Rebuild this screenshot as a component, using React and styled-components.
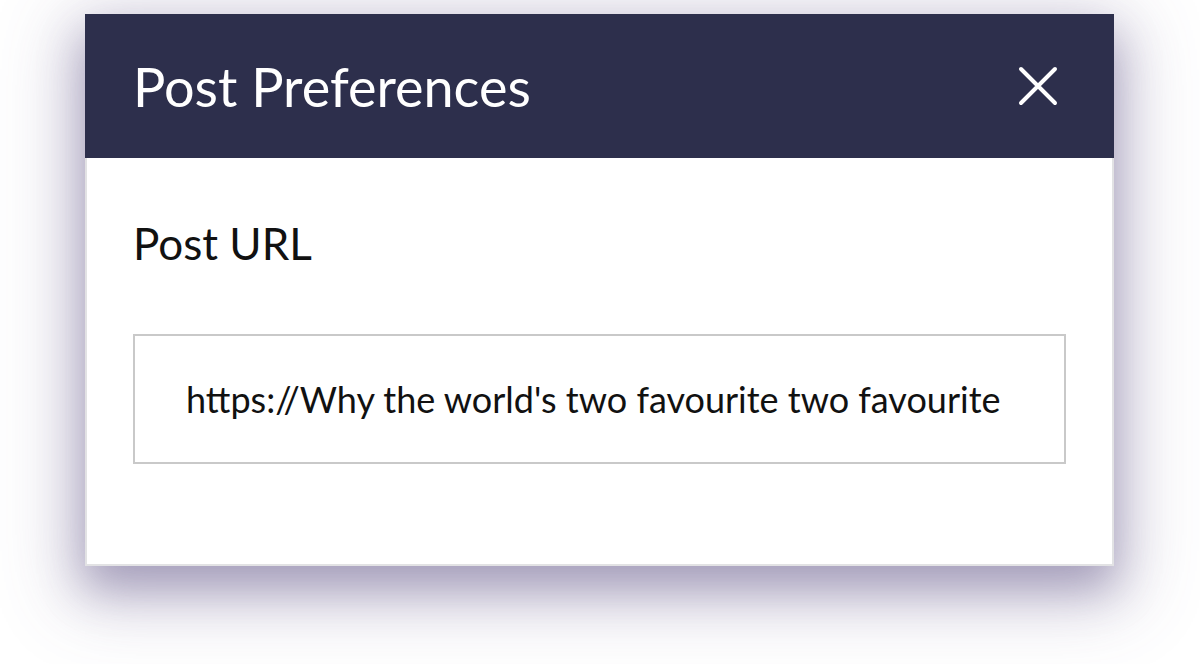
import React from "react";
import styled, { createGlobalStyle } from "styled-components";

const GlobalStyle = createGlobalStyle`
  html, body {
    margin: 0;
    padding: 0;
    background: #fff;
    font-family: Lato, "Open Sans", sans-serif;
  }
`;

const Page = styled.div`
  width: 1200px;
  height: 664px;
  padding: 14px 0 0 85px;
  box-sizing: border-box;
  overflow: hidden;
`;

const Dialog = styled.div`
  width: 1029px;
  height: 552px;
  box-sizing: border-box;
  background: #fff;
  border: 2px solid #e2e2e4;
  border-top: none;
  display: flex;
  flex-direction: column;
  box-shadow: 0 22px 40px 0 rgba(92, 80, 132, 0.38),
    0 20px 70px 14px rgba(92, 80, 132, 0.3);
`;

const Header = styled.div`
  height: 144px;
  margin: 0 -2px;
  background: #2d2f4c;
  display: flex;
  align-items: center;
  justify-content: space-between;
  padding: 0 56px 0 48px;
  flex-shrink: 0;
`;

const Title = styled.h1`
  margin: 0;
  color: #fff;
  font-size: 54px;
  font-weight: 400;
`;

const CloseButton = styled.button`
  border: none;
  background: none;
  padding: 0;
  width: 40px;
  height: 40px;
  display: flex;
  align-items: center;
  justify-content: center;
  cursor: pointer;
`;

const Body = styled.div`
  padding: 63px 46px 0 46px;
  display: flex;
  flex-direction: column;
`;

const Label = styled.div`
  font-size: 44px;
  color: #111;
  line-height: 1;
  margin-bottom: 69px;
`;

const UrlBox = styled.div`
  height: 130px;
  box-sizing: border-box;
  border: 2px solid #c9c9c9;
  display: flex;
  align-items: center;
  padding: 0 51px;
  font-size: 36px;
  color: #111;
  white-space: nowrap;
  overflow: hidden;
`;

export default function App() {
  return (
    <>
      <GlobalStyle />
      <Page>
        <Dialog>
          <Header>
            <Title>Post Preferences</Title>
            <CloseButton aria-label="Close">
              <svg width="40" height="40" viewBox="0 0 40 40">
                <path
                  d="M3 3 L37 37 M37 3 L3 37"
                  stroke="#fff"
                  strokeWidth="4"
                  strokeLinecap="round"
                />
              </svg>
            </CloseButton>
          </Header>
          <Body>
            <Label>Post URL</Label>
            <UrlBox>https://Why the world's two favourite two favourite</UrlBox>
          </Body>
        </Dialog>
      </Page>
    </>
  );
}
